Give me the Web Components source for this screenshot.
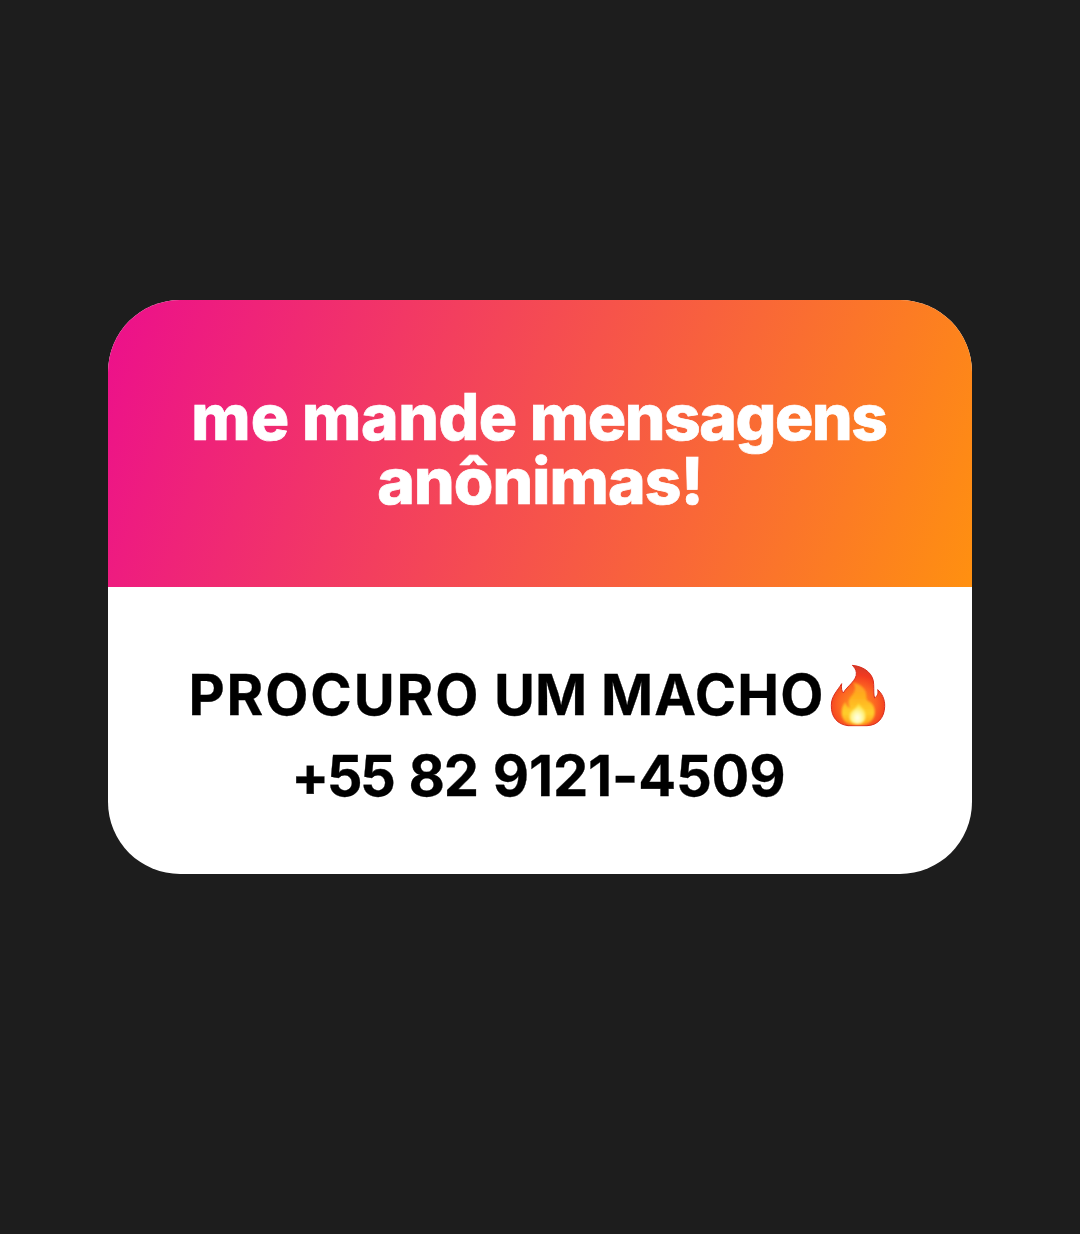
<!DOCTYPE html>
<html lang="pt">
<head>
<meta charset="utf-8">
<title>Mensagens anônimas</title>
<style>
html,body{margin:0;height:100%;background:#1d1d1d}
body{font-family:Inter,"Liberation Sans",sans-serif}
</style>
</head>
<body>
<story-stage>
  <question-card>
    <card-line slot="title" style="--word:-1px;--trail:2px"><tracked-word>me</tracked-word> <tracked-word style="--track:-.45px">mande</tracked-word> <tracked-word style="--track:-1.4px">mensagens</tracked-word></card-line>
    <card-line slot="title"><tracked-word style="--track:-.87px">anônimas!</tracked-word></card-line>
    <card-line slot="message" style="--word:.5px;--trail:1px"><tracked-word style="--track:1.9px">PROCURO</tracked-word> <tracked-word>UM</tracked-word> <tracked-word style="--track:1.1px">MACHO</tracked-word><fire-emoji></fire-emoji></card-line>
    <card-line slot="message" style="--word:1.8px;--trail:3.4px"><tracked-word style="--track:-2.5px">+55</tracked-word> <tracked-word style="--track:-1.2px">82</tracked-word> <tracked-word style="--track:-.15px">9121-4509</tracked-word></card-line>
  </question-card>
</story-stage>
<script>
const define = (name, html) => customElements.define(name, class extends HTMLElement {
  constructor() {
    super();
    this.attachShadow({mode: 'open'}).innerHTML = html;
  }
});

define('story-stage', `<style>
:host{display:flex;justify-content:center;align-items:flex-start;box-sizing:border-box;height:100vh;padding-top:300px;background:#1d1d1d}
</style><slot></slot>`);

define('question-card', `<style>
:host{display:flex;flex-direction:column;width:864px;height:574px;border-radius:72px;overflow:hidden;background:#fff}
header{box-sizing:border-box;height:287px;padding-top:85px;color:#fff;font-weight:800;font-size:64px;line-height:64px;-webkit-text-stroke:.7px #fff;
background:linear-gradient(108.4deg,#ec0f8c 0%,#ff9010 100%)}
section{box-sizing:border-box;height:287px;padding-top:68px;color:#000;font-weight:700;font-size:56px;line-height:81px;-webkit-text-stroke:.3px #000}
</style><header><slot name="title"></slot></header><section><slot name="message"></slot></section>`);

define('card-line', `<style>
:host{display:block;text-align:center;white-space:nowrap;word-spacing:var(--word,0);padding-right:var(--trail,0)}
</style><slot></slot>`);

define('tracked-word', `<style>
:host{display:inline;letter-spacing:var(--track,0)}
</style><slot></slot>`);

define('fire-emoji', `<style>
:host{display:inline-block;width:66px;height:66px;vertical-align:-14px;line-height:0}
svg{display:block;width:66px;height:66px}
</style>
<svg viewBox="15 24 198 198" role="img" aria-label="fogo">
<defs>
<radialGradient id="o" gradientUnits="userSpaceOnUse" cx="112" cy="150" r="112"><stop offset="0" stop-color="#ff9a20"/><stop offset=".5" stop-color="#fc6422"/><stop offset=".8" stop-color="#f23a20"/><stop offset="1" stop-color="#d83b28"/></radialGradient>
<linearGradient id="i" x1="0" y1="0" x2="0" y2="1"><stop offset="0" stop-color="#ff9a22"/><stop offset=".35" stop-color="#ffb01e"/><stop offset=".72" stop-color="#ffcf2c"/><stop offset="1" stop-color="#ff9e18"/></linearGradient>
<radialGradient id="c" cx=".5" cy=".7" r=".6"><stop offset="0" stop-color="#fffff0"/><stop offset=".45" stop-color="#fff9a8"/><stop offset="1" stop-color="#ffe03c"/></radialGradient>
<filter id="s" x="-20%" y="-20%" width="140%" height="140%"><feGaussianBlur stdDeviation="2.5"/></filter>
<clipPath id="k"><path d="M97 31C136 35 161 58 161 88C162 106 160 118 164 129C172 124 176 114 173 104C185 114 195 132 194 155C193 187 174 211 141 212L84 212C52 208 33 186 34 151C34 123 52 108 65 86C63 100 65 108 70 114C80 94 112 76 109 53C108 43 103 37 97 31Z"/></clipPath>
</defs>
<path d="M97 31C136 35 161 58 161 88C162 106 160 118 164 129C172 124 176 114 173 104C185 114 195 132 194 155C193 187 174 211 141 212L84 212C52 208 33 186 34 151C34 123 52 108 65 86C63 100 65 108 70 114C80 94 112 76 109 53C108 43 103 37 97 31Z" fill="url(#o)" stroke="#d92d1c" stroke-width="3" stroke-linejoin="round"/>
<g clip-path="url(#k)">
<path filter="url(#s)" d="M98 82C123 88 141 104 139 126C139 135 142 139 146 139C159 146 165 158 164 173C163 195 147 211 113 211C80 211 64 195 65 172C65 158 69 149 77 141C78 150 82 156 91 159C82 143 86 133 97 120C108 107 107 94 98 82Z" fill="url(#i)"/>
<path filter="url(#s)" d="M115 145C123 158 137 163 137 184C137 199 127 207 112 207C96 207 87 197 88 184C89 167 109 164 115 145Z" fill="url(#c)"/>
</g>
</svg>`);
</script>
</body>
</html>
